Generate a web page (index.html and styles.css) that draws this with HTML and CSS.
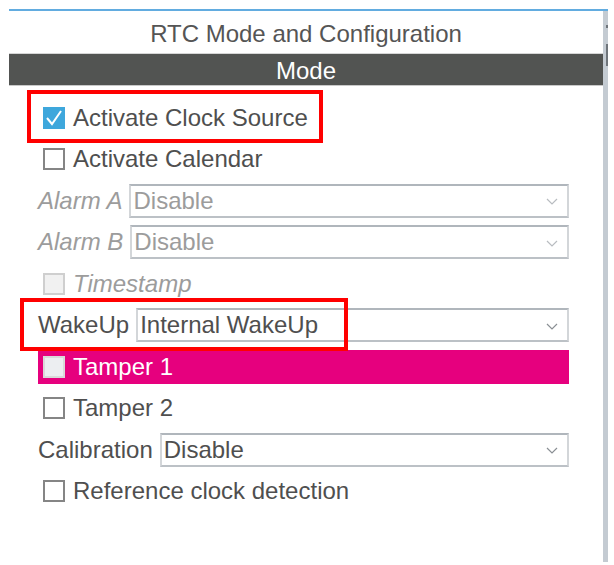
FILE: index.html
```html
<!DOCTYPE html>
<html>
<head>
<meta charset="utf-8">
<link rel="stylesheet" href="styles.css">
</head>
<body>
<div class="screen">
  <div class="window">
    <div class="main">
      <div class="title">RTC Mode and Configuration</div>
      <div class="bar">Mode</div>
      <div class="content">
        <div class="row">
          <span class="cb checked"><svg width="22" height="22" viewBox="0 0 22 22"><polyline points="4,11 9,17 18,4" fill="none" stroke="#fff" stroke-width="2"/></svg></span>
          <span class="txt">Activate Clock Source</span>
        </div>
        <div class="row">
          <span class="cb"></span>
          <span class="txt">Activate Calendar</span>
        </div>
        <div class="row">
          <span class="lbl dis">Alarm A</span>
          <div class="sel dis"><span>Disable</span><svg class="chev" width="12" height="7" viewBox="0 0 12 7"><polyline points="1,1 6,6 11,1" fill="none" stroke="#b8bcc0" stroke-width="1.2"/></svg></div>
        </div>
        <div class="row">
          <span class="lbl dis">Alarm B</span>
          <div class="sel dis"><span>Disable</span><svg class="chev" width="12" height="7" viewBox="0 0 12 7"><polyline points="1,1 6,6 11,1" fill="none" stroke="#b8bcc0" stroke-width="1.2"/></svg></div>
        </div>
        <div class="row">
          <span class="cb off"></span>
          <span class="txt dis">Timestamp</span>
        </div>
        <div class="row">
          <span class="lbl">WakeUp</span>
          <div class="sel"><span>Internal WakeUp</span><svg class="chev" width="12" height="7" viewBox="0 0 12 7"><polyline points="1,1 6,6 11,1" fill="none" stroke="#8a8f94" stroke-width="1.2"/></svg></div>
        </div>
        <div class="row">
          <div class="hl">
            <span class="cb hlcb"></span>
            <span class="txt white">Tamper 1</span>
          </div>
        </div>
        <div class="row">
          <span class="cb"></span>
          <span class="txt">Tamper 2</span>
        </div>
        <div class="row">
          <span class="lbl">Calibration</span>
          <div class="sel"><span>Disable</span><svg class="chev" width="12" height="7" viewBox="0 0 12 7"><polyline points="1,1 6,6 11,1" fill="none" stroke="#8a8f94" stroke-width="1.2"/></svg></div>
        </div>
        <div class="row">
          <span class="cb"></span>
          <span class="txt">Reference clock detection</span>
        </div>
      </div>
    </div>
    <div class="scroll"><div class="dot"></div><div class="thumb"></div></div>
  </div>
  <div class="mark mark1"></div>
  <div class="mark mark2"></div>
</div>
</body>
</html>
```
FILE: styles.css
```css
html, body {
  margin: 0;
  padding: 0;
  background: #fff;
}
.screen {
  position: relative;
  width: 614px;
  height: 565px;
  overflow: hidden;
  font-family: "Liberation Sans", Arial, sans-serif;
  color: #4f4f4f;
}
.window {
  margin: 9px 0 0 9px;
  width: 599px;
  height: 551px;
  border-top: 2px solid #62ace0;
  display: flex;
}
.main {
  flex: 1;
}
.scroll {
  width: 5px;
  background: #c4cbd2;
  display: flex;
  flex-direction: column;
  align-items: flex-end;
}
.scroll .dot {
  width: 2px;
  height: 3px;
  margin-top: 14px;
  background: #6f757b;
}
.scroll .thumb {
  width: 2px;
  height: 22px;
  margin-top: 16px;
  background: #6f757b;
}
.title {
  height: 38px;
  padding-top: 4px;
  display: flex;
  align-items: center;
  justify-content: center;
  font-size: 24px;
  color: #555;
  border-bottom: 1px solid #d6d6d6;
}
.bar {
  height: 28px;
  padding-top: 3px;
  background: #525452;
  color: #fff;
  font-size: 24px;
  display: flex;
  align-items: center;
  justify-content: center;
  border-bottom: 1px solid #c9c9c9;
}
.content {
  padding: 11px 34px 0 29px;
}
.row {
  height: 41.5px;
  display: flex;
  align-items: center;
  font-size: 24px;
}
.cb {
  width: 22px;
  height: 22px;
  box-sizing: border-box;
  border: 2px solid #858585;
  background: #fff;
  margin-left: 5px;
  margin-right: 8px;
  flex: none;
  display: block;
}
.cb.checked {
  border: none;
  background: #3ea7dc;
}
.cb.checked svg {
  display: block;
}
.cb.off {
  border-color: #cfcfcf;
  background: #f1f1f1;
}
.cb.hlcb {
  border-color: #d9d9d9;
  background: #eceef1;
}
.txt.dis, .lbl.dis {
  font-style: italic;
  color: #9c9c9c;
}
.txt.white {
  color: #fff;
}
.lbl {
  margin-right: 7px;
  flex: none;
}
.sel {
  flex: 1;
  height: 34px;
  box-sizing: border-box;
  border: 2px solid #d3d6d9;
  border-top-color: #b0b6bc;
  border-bottom-color: #bcc1c6;
  padding: 0 9px 0 2px;
  display: flex;
  align-items: center;
  justify-content: space-between;
}
.sel.dis {
  color: #9c9c9c;
}
.chev {
  display: block;
  margin-top: 2px;
}
.hl {
  flex: 1;
  height: 34px;
  background: #e6007e;
  display: flex;
  align-items: center;
}
.mark {
  position: absolute;
  border: 4px solid #ff0000;
  box-sizing: border-box;
}
.mark1 {
  left: 27px;
  top: 90px;
  width: 296px;
  height: 53px;
}
.mark2 {
  left: 20px;
  top: 298px;
  width: 328px;
  height: 53px;
}
```
